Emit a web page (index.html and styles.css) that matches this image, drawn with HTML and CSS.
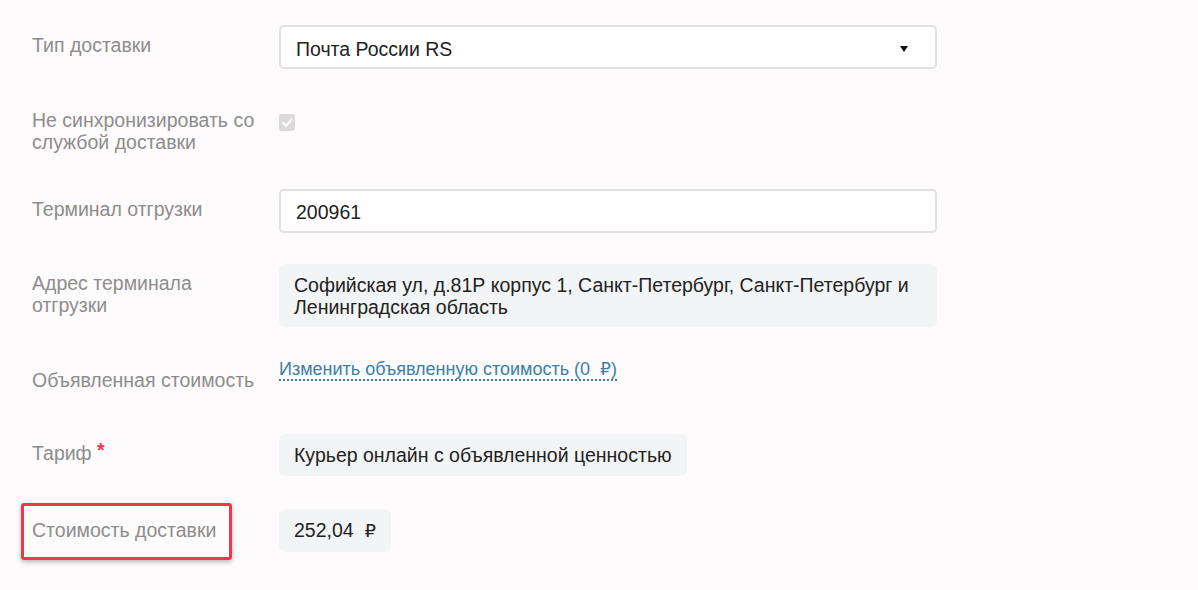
FILE: index.html
```html
<!DOCTYPE html>
<html lang="ru">
<head>
<meta charset="utf-8">
<title>Доставка</title>
<link rel="stylesheet" href="styles.css">
</head>
<body>
<div class="form">
  <div class="row row-type">
    <div class="label lp9">Тип доставки</div>
    <div class="control">
      <div class="select">
        <span>Почта России RS</span>
        <span class="caret"></span>
      </div>
    </div>
  </div>

  <div class="row row-sync">
    <div class="label">Не синхронизировать со службой доставки</div>
    <div class="control">
      <span class="checkbox">
        <svg width="16" height="17" viewBox="0 0 16 17"><path d="M4 9 L7 12 L12.5 5.5" fill="none" stroke="#fff" stroke-width="2" stroke-linecap="round" stroke-linejoin="round"/></svg>
      </span>
    </div>
  </div>

  <div class="row row-terminal">
    <div class="label lp9">Терминал отгрузки</div>
    <div class="control">
      <div class="input">200961</div>
    </div>
  </div>

  <div class="row row-address">
    <div class="label lp8">Адрес терминала отгрузки</div>
    <div class="control">
      <div class="static block">Софийская ул, д.81Р корпус 1, Санкт-Петербург, Санкт-Петербург и Ленинградская область</div>
    </div>
  </div>

  <div class="row row-declared">
    <div class="label lp12">Объявленная стоимость</div>
    <div class="control">
      <a class="link">Изменить объявленную стоимость (0&nbsp; <span class="rub">₽</span>)</a>
    </div>
  </div>

  <div class="row row-tariff">
    <div class="label lp8">Тариф <span class="req">*</span></div>
    <div class="control">
      <div class="static">Курьер онлайн с объявленной ценностью</div>
    </div>
  </div>

  <div class="row row-cost">
    <div class="label lp10"><span class="highlight">Стоимость доставки</span></div>
    <div class="control">
      <div class="static">252,04&nbsp; <span class="rub">₽</span></div>
    </div>
  </div>

  <div class="row row-last">
    <div class="label"></div>
    <div class="control">
      <div class="static stub"></div>
    </div>
  </div>
</div>
</body>
</html>
```

FILE: styles.css
```css
html, body {
  margin: 0;
  padding: 0;
  background: #fdfbfb;
  overflow: hidden;
}

body {
  font-family: "Liberation Sans", Arial, "DejaVu Sans", sans-serif;
  font-size: 19.5px;
  line-height: 22px;
  color: #222;
  height: 590px;
}

.form {
  padding: 25px 0 0 32px;
}

.row {
  display: grid;
  grid-template-columns: 247px 658px;
  align-items: start;
}

.label {
  color: #8d8d8d;
  padding-right: 16px;
}

.lp8 { padding-top: 8px; }
.lp9 { padding-top: 9px; }
.lp10 { padding-top: 10px; }
.lp12 { padding-top: 12px; }

.row-type { margin-bottom: 40px; }
.row-sync { margin-bottom: 36px; }
.row-terminal { margin-bottom: 31px; }
.row-address { margin-bottom: 30px; }
.row-declared { margin-bottom: 43px; }
.row-tariff { margin-bottom: 33px; }
.row-cost { margin-bottom: 34px; }

.select,
.input {
  box-sizing: border-box;
  height: 44px;
  border: 2px solid #e1e1e1;
  border-radius: 5px;
  background: #fff;
  padding: 10px 15px 0 15px;
  color: #222;
}

.select {
  display: flex;
  justify-content: space-between;
  align-items: flex-start;
  padding-top: 11px;
}

.input {
  padding-top: 10px;
}

.caret {
  width: 0;
  height: 0;
  margin-top: 8px;
  margin-right: 12px;
  border-left: 4.5px solid transparent;
  border-right: 4.5px solid transparent;
  border-top: 6px solid #111;
}

.checkbox {
  display: block;
  width: 16px;
  height: 17px;
  margin-top: 5px;
  border-radius: 3px;
  background: #dadada;
}

.checkbox svg {
  display: block;
}

.static {
  display: inline-block;
  box-sizing: border-box;
  background: #f3f4f5;
  border-radius: 6px;
  padding: 10px 15px;
  color: #222;
}

.static.block {
  display: block;
  padding: 10px 15px 9px 15px;
}

.stub {
  width: 69px;
  height: 5px;
  padding: 0;
  border-radius: 6px 6px 0 0;
}

.link {
  display: inline-block;
  font-size: 18px;
  color: #3b7fa8;
  text-decoration: none;
  border-bottom: 2px dotted #3b7fa8;
  line-height: 20px;
  margin-top: 1px;
}

.link .rub {
  font-size: 17px;
}

.rub {
  font-family: "DejaVu Sans", sans-serif;
  font-size: 18px;
}

.req {
  color: #e4394a;
  font-weight: bold;
  position: relative;
  top: -3px;
}

.highlight {
  position: relative;
  display: inline-block;
}

.highlight::after {
  content: "";
  position: absolute;
  left: -11px;
  top: -16px;
  width: 211px;
  height: 57px;
  box-sizing: border-box;
  border: 3px solid #ec3849;
  border-radius: 3px;
  box-shadow: 0 2px 5px rgba(0, 0, 0, 0.28);
}
```
